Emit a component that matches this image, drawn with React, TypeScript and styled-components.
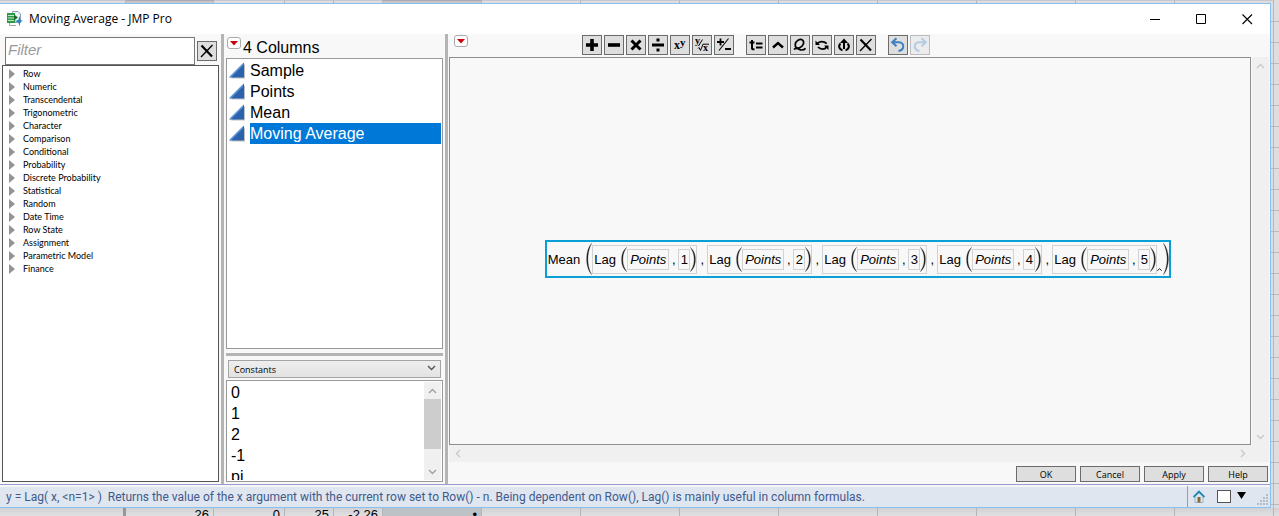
import React from "react";
import styled, { createGlobalStyle } from "styled-components";

const ui = `"Open Sans", "Noto Sans", sans-serif`;
const narrow = `Lato, "Open Sans", sans-serif`;
const hint = `Roboto, "Open Sans", sans-serif`;
const arial = `"Liberation Sans", Arial, sans-serif`;

const Global = createGlobalStyle`
  *, *::before, *::after { box-sizing: border-box; }
  body { margin: 0; background: #e2e2e4; font-family: ${ui}; color: #000; }
  button, input, select { font: inherit; color: inherit; margin: 0; padding: 0; }
  ul { list-style: none; margin: 0; padding: 0; }
  svg { display: block; flex: none; }
`;

const Page = styled.div`
  display: flex;
  flex-direction: column;
  height: 100vh;
  overflow: hidden;
`;

/* ---- data table seen around the window ---- */
const SheetTop = styled.div`
  flex: none;
  height: 3px;
  display: flex;
  background: #dddde0;
`;
const SheetTopCell = styled.div<{ $w?: number; $dark?: boolean }>`
  flex: none;
  width: ${(p) => p.$w}px;
  border-right: 1px solid #b4b4ba;
  border-top: 1px solid ${(p) => (p.$dark ? "#aaaaae" : "#c8c8d0")};
  background: ${(p) => (p.$dark ? "#c4c6c8" : "transparent")};
`;
const Middle = styled.div`
  flex: 1;
  min-height: 0;
  display: flex;
`;
const SheetRight = styled.div`
  flex: none;
  width: 8px;
  padding-left: 2px;
  background: repeating-linear-gradient(#dedee0 0 18px, #b8b8be 18px 19px, #dedee0 19px 21px);
`;
const SheetRightLine = styled.div`
  height: 100%;
  border-left: 1px solid #b8b8be;
`;
const SheetBottom = styled.div`
  flex: none;
  height: 8px;
  display: flex;
  overflow: hidden;
  background: linear-gradient(#d2d2d4, #e0e0e2);
  font: 13px/13px ${arial};
`;
const SheetCell = styled.div<{ $w: number; $fill?: string; $thick?: boolean }>`
  flex: none;
  width: ${(p) => p.$w}px;
  height: 16px;
  padding-right: 4px;
  text-align: right;
  background: ${(p) => p.$fill || "transparent"};
  border-right: ${(p) => (p.$thick ? "3px solid #97979a" : "1px solid #b4b4ba")};
`;

/* ---- window frame ---- */
const Window = styled.main`
  flex: 1;
  min-width: 0;
  display: flex;
  flex-direction: column;
  border: 1px solid #86c0f0;
  border-left: 0;
  background: #f8f8f8;
`;
const TitleBar = styled.header`
  flex: none;
  height: 30px;
  display: flex;
  align-items: center;
  padding-left: 7px;
  gap: 6px;
  background: #fff;
`;
const Title = styled.h1`
  flex: 1;
  margin: 0;
  font: 12px/16px ${ui};
`;
const CaptionButtons = styled.div`
  display: flex;
`;
const CaptionButton = styled.button`
  width: 46px;
  height: 30px;
  display: grid;
  place-items: center;
  border: 0;
  background: transparent;
`;
const Body = styled.div`
  flex: 1;
  min-height: 0;
  display: flex;
`;
const Splitter = styled.div<{ $row?: boolean }>`
  flex: none;
  background: #b4b4b4;
  ${(p) => (p.$row ? "height: 3px; margin: 4px 0;" : "width: 3px;")}
`;

/* ---- function list ---- */
const FunctionPane = styled.section`
  flex: none;
  width: 221px;
  padding: 3px 2px 2px;
  display: flex;
  flex-direction: column;
`;
const FilterRow = styled.div`
  flex: none;
  display: flex;
  align-items: center;
  gap: 2px;
  padding: 0 2px 0 3px;
`;
const FilterInput = styled.input`
  flex: 1;
  min-width: 0;
  height: 28px;
  border: 1px solid #777;
  background: #fff;
  && { padding: 0 2px 3px; font: 15px/18px ${arial}; }
  &::placeholder { color: #9a9a9a; font-style: italic; opacity: 1; }
`;
const FunctionList = styled.ul`
  && { padding: 1px 6px; }
  flex: 1;
  min-height: 0;
  border: 1px solid #555;
  background: #fff;
`;
const FunctionItem = styled.button`
  display: flex;
  width: 100%;
  height: 13px;
  align-items: center;
  gap: 8px;
  border: 0;
  background: transparent;
  text-align: left;
  && { font: 9px/13px ${narrow}; }
`;

/* ---- columns and constants ---- */
const ColumnPane = styled.section`
  flex: none;
  width: 221px;
  padding: 0 2px 2px;
  display: flex;
  flex-direction: column;
`;
const ColumnHeader = styled.div`
  flex: none;
  display: flex;
  gap: 2px;
  height: 24px;
  padding: 3px 0 0 1px;
`;
const Heading = styled.h2`
  margin: 0;
  font: 16px/22px ${arial};
`;
const RedButton = styled.button`
  width: 14px;
  height: 12px;
  display: grid;
  place-items: center;
  border: 1px solid #aaa;
  border-radius: 3px;
  background: #fff;
`;
const ListBox = styled.ul`
  && { padding: 1px; }
  flex: 1;
  min-height: 0;
  overflow: hidden;
  border: 1px solid #999;
  background: #fff;
  font: 16px/21px ${arial};
`;
const ColumnRow = styled.li`
  display: flex;
  align-items: center;
  gap: 5px;
  padding-left: 1px;
  height: 21px;
`;
const ColumnName = styled.span<{ $on?: boolean }>`
  flex: 1;
  height: 21px;
  color: ${(p) => (p.$on ? "#fff" : "#000")};
  background: ${(p) => (p.$on ? "#0078d7" : "transparent")};
`;
const SelectWrap = styled.label`
  position: relative;
  flex: none;
  display: block;
  margin: 0 2px 2px;
  svg { position: absolute; right: 5px; top: 5px; pointer-events: none; }
`;
const Select = styled.select`
  appearance: none;
  display: block;
  width: 100%;
  height: 18px;
  border: 1px solid #a4a4a4;
  border-radius: 0;
  background: linear-gradient(#efefef, #e2e2e2);
  && { padding: 1px 5px 0; font: 9px/16px ${ui}; }
`;
const ConstantsBox = styled.div`
  flex: none;
  height: 102px;
  display: flex;
  padding: 1px;
  border: 1px solid #999;
  background: #fff;
`;
const Constants = styled.ul`
  && { padding-left: 3px; }
  flex: 1;
  overflow: hidden;
  font: 16px/21px ${arial};
`;
const VScroll = styled.div`
  flex: none;
  width: 17px;
  display: flex;
  flex-direction: column;
  justify-content: space-between;
  background: #f0f0f0;
`;
const HScroll = styled.div`
  flex: none;
  height: 17px;
  display: flex;
  justify-content: space-between;
  padding-right: 18px;
  background: #f0f0f0;
`;
const ScrollButton = styled.button`
  width: 17px;
  height: 17px;
  display: grid;
  place-items: center;
  border: 0;
  background: transparent;
`;
const Thumb = styled.div`
  height: 50px;
  margin-bottom: auto;
  background: #cdcdcd;
`;

/* ---- editor ---- */
const Editor = styled.section`
  flex: 1;
  min-width: 0;
  display: flex;
  flex-direction: column;
  padding: 0 1px;
`;
const Toolbar = styled.div`
  flex: none;
  height: 23px;
  display: flex;
  align-items: flex-start;
  padding: 1px 6px 0 5px;
`;
const ToolGroups = styled.div`
  flex: 1;
  display: flex;
  justify-content: center;
  gap: 12px;
  padding-right: 220px;
`;
const ToolGroup = styled.div`
  display: flex;
  gap: 2px;
`;
const ToolButton = styled.button<{ $dim?: boolean }>`
  flex: none;
  width: 20px;
  height: 20px;
  display: grid;
  place-items: center;
  border: 1px solid ${(p) => (p.$dim ? "#bcbcbc" : "#6c6c6c")};
  background: ${(p) => (p.$dim ? "#ececec" : "#dedede")};
`;
const Work = styled.div`
  flex: 1;
  min-height: 0;
  display: flex;
  gap: 1px;
`;
const Canvas = styled.div`
  flex: 1;
  min-width: 0;
  display: grid;
  place-items: center;
  padding: 16px 0 0 16px;
  border: 1px solid #8e8e8e;
`;
const DialogButtons = styled.div`
  flex: none;
  display: flex;
  justify-content: flex-end;
  gap: 4px;
  padding: 4px 1px 2px;
`;
const DialogButton = styled.button`
  width: 60px;
  height: 16px;
  border: 1px solid #6c6c6c;
  background: #dedede;
  && { padding-top: 1px; font: 9px/13px ${ui}; }
`;

/* ---- formula ---- */
const Formula = styled.div`
  display: flex;
  align-items: center;
  height: 38px;
  padding: 0 0 0 1px;
  border: 2px solid #0aa0d6;
  font: 13px/18px ${arial};
`;
const FnName = styled.span`
  margin-right: 6px;
  padding-top: 1px;
`;
const LagName = styled.span`
  width: 22px;
  margin-right: 5px;
  padding-top: 1px;
`;
const Term = styled.div`
  height: 29px;
  display: flex;
  align-items: center;
  padding-left: 1px;
  border: 1px solid #d2d2d2;
`;
const Arg = styled.span<{ $italic?: boolean }>`
  height: 21px;
  line-height: 20px;
  width: ${(p) => (p.$italic ? 42 : 12)}px;
  text-align: center;
  border: 1px solid #d2d2d2;
  font-style: ${(p) => (p.$italic ? "italic" : "normal")};
`;
const Comma = styled.span<{ $outer?: boolean }>`
  width: ${(p) => (p.$outer ? 10 : 9)}px;
  padding-top: 1px;
  text-align: center;
`;
const Caret = styled.span`
  align-self: flex-end;
  padding-bottom: 5px;
  margin-right: 1px;
`;

/* ---- status bar ---- */
const StatusBar = styled.footer`
  flex: none;
  height: 23px;
  display: flex;
  align-items: stretch;
  border-top: 1px solid #9c9ccb;
  box-shadow: inset 0 2px 0 #f4f6fa;
  background: #dfe6f0;
`;
const Hint = styled.p`
  flex: 1;
  margin: 0;
  padding: 4px 0 0 6px;
  font: 12px/16px ${hint};
  color: #3f5a8c;
  white-space: pre;
  overflow: hidden;
`;
const StatusTools = styled.div`
  flex: none;
  display: flex;
  align-items: center;
  margin-top: 1px;
  padding-left: 5px;
  border-left: 1px solid #9a9ac0;
`;
const Home = styled.button`
  border: 0;
  background: transparent;
  && { margin-right: 12px; }
`;
const Check = styled.input`
  appearance: none;
  width: 14px;
  height: 13px;
  border: 1px solid #555;
  background: #fff;
`;
const MenuButton = styled.button`
  border: 0;
  background: transparent;
  && { margin: 0 11px 2px 6px; }
`;
const Grip = styled.div`
  align-self: flex-end;
  margin: 0 2px 2px 0;
`;

const Chevron = ({ up, color }: { up?: boolean; color: string }) => (
  <svg width="9" height="6" viewBox="0 0 9 6" fill="none" stroke={color} strokeWidth="1.4">
    <path d={up ? "M1 5 4.5 1.5 8 5" : "M1 1 4.5 4.5 8 1"} />
  </svg>
);
const SideChevron = ({ right }: { right?: boolean }) => (
  <svg width="6" height="9" viewBox="0 0 6 9" fill="none" stroke="#c8c8c8" strokeWidth="1.4">
    <path d={right ? "M1 1 4.5 4.5 1 8" : "M5 1 1.5 4.5 5 8"} />
  </svg>
);
const RedTriangle = ({ label }: { label: string }) => (
  <RedButton aria-label={label}>
    <svg width="8" height="5" viewBox="0 0 8 5"><path d="M0 0H8L4 4.5Z" fill="#c8000c" /></svg>
  </RedButton>
);
const Paren = ({ close, tall }: { close?: boolean; tall?: boolean }) => {
  const h = tall ? 32 : 25;
  const m = h / 2;
  const d = close
    ? `M.3 .3C3 3 5.4 ${m - 7} 5.4 ${m}S3 ${h - 3} .3 ${h - 0.3}C2.4 ${h - 4} 4.1 ${m + 6} 4.1 ${m}S2.4 4 .3 .3Z`
    : `M5.7 .3C3 3 .6 ${m - 7} .6 ${m}S3 ${h - 3} 5.7 ${h - 0.3}C3.6 ${h - 4} 1.9 ${m + 6} 1.9 ${m}S3.6 4 5.7 .3Z`;
  return (
    <svg width="6" height={h} viewBox={`0 0 6 ${h}`}>
      <path d={d} fill="#222" stroke="#222" strokeWidth=".25" />
    </svg>
  );
};
const CrossIcon = () => (
  <svg width="14" height="14" viewBox="0 0 14 14" stroke="#000" fill="none">
    <path d="M1.5 1.5 12 12.5" strokeWidth="2.2" />
    <path d="M12.5 1 1 13" strokeWidth="1.3" />
  </svg>
);
const ContinuousIcon = () => (
  <svg width="16" height="17" viewBox="0 0 16 17">
    <path d="M2 16.5H16V2Z" fill="#8c8c8c" opacity=".55" />
    <path d="M0 15.5 15 .5V15.5Z" fill="#2b62ae" />
    <path d="M1.5 14.8 14 2.3" stroke="#5f96da" strokeWidth="1.6" />
  </svg>
);
const AppIcon = () => (
  <svg width="16" height="16" viewBox="0 0 16 16">
    <path d="M5.5 .5H11L13.5 3V11.5H5.5Z" fill="#eef3f8" stroke="#8aa0b8" />
    <path d="M0 2H8V12H0Z" fill="#2e9a44" />
    <path d="M1 4.5H7M1 7H7M1 9.5H7" stroke="#bfe8c4" />
    <path d="M7 3.5 11 6.5 7 9.5Z" fill="#176b2a" />
    <path d="M2.5 12V14.5H9" stroke="#9aa4ae" fill="none" />
    <path d="M12.5 5 13.4 9.1 16 10 13.4 10.9 12.5 15.5 11.3 11.2 7.5 10 11.3 9Z" fill="#2287bd" />
  </svg>
);

const icon = (children: React.ReactNode) => (
  <svg width="18" height="18" viewBox="0 0 18 18" fill="none" stroke="#000">{children}</svg>
);
const arithmetic: [string, React.ReactNode][] = [
  ["Add", icon(<path d="M9 3V15M3 9H15" strokeWidth="3.6" />)],
  ["Subtract", icon(<path d="M3 9H15" strokeWidth="3.6" />)],
  ["Multiply", icon(<path d="M4.5 4.5 13.5 13.5M13.5 4.5 4.5 13.5" strokeWidth="3" />)],
  ["Divide", icon(<><path d="M3 9H15" strokeWidth="3" /><path d="M7.5 2.5H10.5V5.5H7.5ZM7.5 12.5H10.5V15.5H7.5Z" fill="#000" stroke="none" /></>)],
  ["Power", icon(<g fill="#000" stroke="none" fontFamily="Liberation Serif, serif" fontWeight="700"><text x="3" y="13" fontSize="12">x</text><text x="9" y="10" fontSize="11">y</text></g>)],
  ["Root", icon(<><g fill="#000" stroke="none" fontFamily="Liberation Serif, serif" fontWeight="700"><text x="2" y="8" fontSize="10">y</text><text x="10" y="15" fontSize="10">x</text></g><path d="M5 12.5 6 11.5 7.5 14.5 10 8.2H16M9.5 3.5 5.5 10" strokeWidth="1" /></>)],
  ["Change sign", icon(<><path d="M5.5 2.5V9.5M2 6H9M10 13H16" strokeWidth="1.8" /><path d="M13.5 2.5 4 14.5" strokeWidth="1.1" /></>)],
];
const editing: [string, React.ReactNode][] = [
  ["Local variable", icon(<><path d="M5 4V12.5Q5 13.5 7.5 13.2M2.5 6.5H7.5" strokeWidth="2" /><path d="M9 7.5H15.5M9 11.5H15.5" strokeWidth="2" /></>)],
  ["Insert", icon(<path d="M4 11.5 9 7 14 11.5" strokeWidth="2.4" />)],
  ["Peel expression", icon(<path d="M12.5 6C12.5 3.5 9.5 2.8 7 4.2 3.5 6.2 3.3 11.5 6.5 12 10 12.3 13.3 8.5 12.6 5.5M3 13.5C6 10.5 8 14 10.5 14 12.5 14 13.5 13.8 14.5 12.2" strokeWidth="1.7" />)],
  ["Swap", icon(<><path d="M4.5 7.5C6 5.2 10.5 4.6 13.8 7.6M13.5 11C12 13.8 7.5 13.8 5 11" strokeWidth="1.8" /><path d="M2.5 4.5V9H7ZM15.5 14V9.5H11Z" fill="#000" stroke="none" /></>)],
  ["Promote", icon(<><path d="M9 13V5M5.5 7.5C2.8 10 4.5 13.8 7.5 14.2M12.5 7.5C15.2 10 13.5 13.8 10.5 14.2" strokeWidth="2" /><path d="M5 7 9 2.5 13 7Z" fill="#000" stroke="none" /></>)],
  ["Delete", <CrossIcon />],
];
const UndoArrow = ({ color }: { color: string }) => (
  <svg width="18" height="18" viewBox="0 0 18 18" fill="none" stroke={color} strokeWidth="2">
    <path d="M7.5 2.2 3.2 6.2 7.5 10.2M3.5 6.2H10C16 6.5 15.5 14 9.5 15" />
  </svg>
);
const RedoArrow = ({ color }: { color: string }) => (
  <svg width="18" height="18" viewBox="0 0 18 18" fill="none" stroke={color} strokeWidth="2">
    <path d="M10.5 2.2 14.8 6.2 10.5 10.2M14.5 6.2H8C2 6.5 2.5 14 8.5 15" />
  </svg>
);

const functions = [
  "Row", "Numeric", "Transcendental", "Trigonometric", "Character", "Comparison", "Conditional",
  "Probability", "Discrete Probability", "Statistical", "Random", "Date Time", "Row State",
  "Assignment", "Parametric Model", "Finance",
];
const columns = ["Sample", "Points", "Mean", "Moving Average"];
const constants = ["0", "1", "2", "-1", "pi"];
const lags = [1, 2, 3, 4, 5];

export default function App() {
  return (
    <>
      <Global />
      <Page>
        <SheetTop>
          <SheetTopCell $w={126} />
          <SheetTopCell $w={88} $dark />
          <SheetTopCell $w={71} />
          <SheetTopCell $w={49} />
          <SheetTopCell $w={49} />
          <SheetTopCell $w={99} $dark />
          {Array.from({ length: 8 }, (_, i) => <SheetTopCell key={i} $w={99} />)}
        </SheetTop>
        <Middle>
          <Window>
            <TitleBar>
              <AppIcon />
              <Title>Moving Average - JMP Pro</Title>
              <CaptionButtons>
                <CaptionButton aria-label="Minimize"><svg width="11" height="11" viewBox="0 0 11 11"><path d="M0 5.5H10" stroke="#000" /></svg></CaptionButton>
                <CaptionButton aria-label="Maximize"><svg width="11" height="11" viewBox="0 0 11 11"><path d="M.5 .5H9.5V9.5H.5Z" fill="none" stroke="#000" /></svg></CaptionButton>
                <CaptionButton aria-label="Close"><svg width="11" height="11" viewBox="0 0 11 11"><path d="M.5 .5 10 10M10 .5 .5 10" stroke="#000" strokeWidth="1.1" /></svg></CaptionButton>
              </CaptionButtons>
            </TitleBar>
            <Body>
              <FunctionPane>
                <FilterRow>
                  <FilterInput aria-label="Filter functions" placeholder="Filter" />
                  <ToolButton aria-label="Clear filter"><CrossIcon /></ToolButton>
                </FilterRow>
                <FunctionList>
                  {functions.map((f) => (
                    <li key={f}>
                      <FunctionItem>
                        <svg width="6" height="10" viewBox="0 0 6 10"><path d="M0 0 6 5 0 10Z" fill="#949494" /></svg>
                        {f}
                      </FunctionItem>
                    </li>
                  ))}
                </FunctionList>
              </FunctionPane>
              <Splitter />
              <ColumnPane>
                <ColumnHeader>
                  <RedTriangle label="Column options" />
                  <Heading>4 Columns</Heading>
                </ColumnHeader>
                <ListBox>
                  {columns.map((c) => (
                    <ColumnRow key={c}>
                      <ContinuousIcon />
                      <ColumnName $on={c === "Moving Average"}>{c}</ColumnName>
                    </ColumnRow>
                  ))}
                </ListBox>
                <Splitter $row />
                <SelectWrap>
                  <Select aria-label="Value list" defaultValue="Constants">
                    <option>Constants</option>
                  </Select>
                  <Chevron color="#555" />
                </SelectWrap>
                <ConstantsBox>
                  <Constants>
                    {constants.map((c) => <li key={c}>{c}</li>)}
                  </Constants>
                  <VScroll>
                    <ScrollButton aria-label="Scroll up"><Chevron up color="#a0a0a0" /></ScrollButton>
                    <Thumb />
                    <ScrollButton aria-label="Scroll down"><Chevron color="#a0a0a0" /></ScrollButton>
                  </VScroll>
                </ConstantsBox>
              </ColumnPane>
              <Splitter />
              <Editor>
                <Toolbar>
                  <RedTriangle label="Formula options" />
                  <ToolGroups>
                    <ToolGroup>
                      {arithmetic.map(([name, art]) => <ToolButton key={name} aria-label={name}>{art}</ToolButton>)}
                    </ToolGroup>
                    <ToolGroup>
                      {editing.map(([name, art]) => <ToolButton key={name} aria-label={name}>{art}</ToolButton>)}
                    </ToolGroup>
                    <ToolGroup>
                      <ToolButton aria-label="Undo"><UndoArrow color="#3f80c4" /></ToolButton>
                      <ToolButton aria-label="Redo" $dim disabled><RedoArrow color="#b4cbe4" /></ToolButton>
                    </ToolGroup>
                  </ToolGroups>
                </Toolbar>
                <Work>
                  <Canvas>
                    <Formula>
                      <FnName>Mean</FnName>
                      <Paren tall />
                      {lags.map((n) => (
                        <React.Fragment key={n}>
                          <Term>
                            <LagName>Lag</LagName>
                            <Paren />
                            <Arg $italic>Points</Arg>
                            <Comma>,</Comma>
                            <Arg>{n}</Arg>
                            <Paren close />
                          </Term>
                          {n < 5 && <Comma $outer>,</Comma>}
                        </React.Fragment>
                      ))}
                      <Caret><svg width="5" height="3" viewBox="0 0 5 3"><path d="M.3 2.7 2.5 .7 4.7 2.7" fill="none" stroke="#222" /></svg></Caret>
                      <Paren close tall />
                    </Formula>
                  </Canvas>
                  <VScroll>
                    <ScrollButton aria-label="Scroll up"><Chevron up color="#c8c8c8" /></ScrollButton>
                    <ScrollButton aria-label="Scroll down"><Chevron color="#c8c8c8" /></ScrollButton>
                  </VScroll>
                </Work>
                <HScroll>
                  <ScrollButton aria-label="Scroll left"><SideChevron /></ScrollButton>
                  <ScrollButton aria-label="Scroll right"><SideChevron right /></ScrollButton>
                </HScroll>
                <DialogButtons>
                  {["OK", "Cancel", "Apply", "Help"].map((b) => <DialogButton key={b}>{b}</DialogButton>)}
                </DialogButtons>
              </Editor>
            </Body>
            <StatusBar>
              <Hint>{"y = Lag( x, <n=1> )  Returns the value of the x argument with the current row set to Row() - n. Being dependent on Row(), Lag() is mainly useful in column formulas."}</Hint>
              <StatusTools>
                <Home aria-label="Home">
                  <svg width="12" height="13" viewBox="0 0 12 13">
                    <path d="M2 6V12.5H10V6L6 2.5Z" fill="#d8e8f2" stroke="#8aaabe" strokeWidth=".8" />
                    <path d="M4.5 7H7.5V12.5H4.5Z" fill="#8c6a2c" />
                    <path d="M.5 7 6 1.5 11.5 7" fill="none" stroke="#1f86b4" strokeWidth="1.8" />
                  </svg>
                </Home>
                <Check type="checkbox" aria-label="Select window" />
                <MenuButton aria-label="Window menu">
                  <svg width="9" height="7" viewBox="0 0 9 7"><path d="M0 0H9L4.5 7Z" fill="#000" /></svg>
                </MenuButton>
                <Grip>
                  <svg width="11" height="11" viewBox="0 0 11 11" fill="#b4bccb">
                    <path d="M9 0h2v2h-2zM9 3h2v2h-2zM9 6h2v2h-2zM9 9h2v2h-2zM6 3h2v2h-2zM6 6h2v2h-2zM6 9h2v2h-2zM3 6h2v2h-2zM3 9h2v2h-2zM0 9h2v2h-2z" />
                  </svg>
                </Grip>
              </StatusTools>
            </StatusBar>
          </Window>
          <SheetRight><SheetRightLine /></SheetRight>
        </Middle>
        <SheetBottom>
          <SheetCell $w={126} $thick />
          <SheetCell $w={88}>26</SheetCell>
          <SheetCell $w={71}>0</SheetCell>
          <SheetCell $w={49}>25</SheetCell>
          <SheetCell $w={49}>-2.26</SheetCell>
          <SheetCell $w={99} $fill="#bcc2c6">•</SheetCell>
          {Array.from({ length: 8 }, (_, i) => <SheetCell key={i} $w={99} />)}
        </SheetBottom>
      </Page>
    </>
  );
}
